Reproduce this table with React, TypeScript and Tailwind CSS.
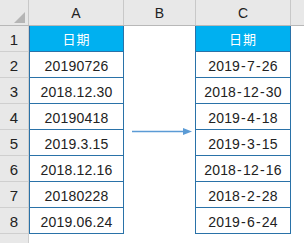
const left = ['20190726', '2018.12.30', '20190418', '2019.3.15', '2018.12.16', '20180228', '2019.06.24'];
const right = ['2019-7-26', '2018-12-30', '2019-4-18', '2019-3-15', '2018-12-16', '2018-2-28', '2019-6-24'];

const font = { fontFamily: '"Liberation Sans", Arial, "Noto Sans CJK SC", sans-serif' };

function Dashed({ text }: { text: string }) {
  const parts = text.split('-');
  return (
    <span>
      {parts.map((p, i) => (
        <span key={i}>
          {i > 0 && <span className="mx-[1px]">-</span>}
          {p}
        </span>
      ))}
    </span>
  );
}

export default function App() {
  return (
    <div className="relative w-[304px] h-[243px] overflow-hidden bg-white text-[#222]" style={font}>
      {/* column headers */}
      <div className="flex h-[26px] bg-[#e8e8e8] border-b border-[#b8b8b8] text-[14px]">
        <div className="w-[29px] shrink-0 border-r border-[#c8c8c8] flex justify-end items-end pr-[3px] pb-[2px]">
          <svg width="11" height="11" viewBox="0 0 11 11">
            <polygon points="11,0 11,11 0,11" fill="#b5b5b5" />
          </svg>
        </div>
        <div className="w-[95px] shrink-0 border-r border-[#c8c8c8] flex items-center justify-center pt-[2px]">A</div>
        <div className="w-[72px] shrink-0 border-r border-[#c8c8c8] flex items-center justify-center pt-[2px]">B</div>
        <div className="w-[95px] shrink-0 border-r border-[#c8c8c8] flex items-center justify-center pt-[2px]">C</div>
        <div className="flex-1" />
      </div>

      {/* row 1: blue header */}
      <div className="flex h-[26px]">
        <div className="w-[29px] shrink-0 bg-[#e8e8e8] border-r border-b border-[#cfcfcf] flex items-center justify-center pt-[3px] text-[15px]">1</div>
        <div className="w-[95px] shrink-0 bg-[#00b0f0] border-x border-b border-[#2a72a8] flex items-center justify-center pt-[2px] text-white text-[13px] tracking-[1px]">日期</div>
        <div className="w-[71px] shrink-0" />
        <div className="w-[96px] shrink-0 bg-[#00b0f0] border-x border-b border-[#2a72a8] flex items-center justify-center pt-[2px] text-white text-[13px] tracking-[1px]">日期</div>
        <div className="flex-1" />
      </div>

      {left.map((v, i) => (
        <div key={v} className="flex h-[26px]">
          <div className="w-[29px] shrink-0 bg-[#e8e8e8] border-r border-b border-[#cfcfcf] flex items-center justify-center pt-[3px] text-[15px]">{i + 2}</div>
          <div className="w-[95px] shrink-0 border-x border-b border-[#2a72a8] flex items-center justify-center pt-[3px] text-[14px] tracking-[0.2px]">{v}</div>
          <div className="w-[71px] shrink-0" />
          <div className="w-[96px] shrink-0 border-x border-b border-[#2a72a8] flex items-center justify-center pt-[3px] text-[14px] tracking-[0.2px]">
            <Dashed text={right[i]} />
          </div>
          <div className="flex-1" />
        </div>
      ))}

      {/* row 9 partial */}
      <div className="flex h-[26px]">
        <div className="w-[29px] shrink-0 bg-[#e8e8e8] border-r border-[#cfcfcf]" />
      </div>

      {/* arrow shape */}
      <svg className="absolute left-[131px] top-[127px]" width="62" height="9" viewBox="0 0 62 9">
        <line x1="1" y1="4.5" x2="53" y2="4.5" stroke="#5b9bd5" strokeWidth="1.3" />
        <polygon points="52,1 61,4.5 52,8" fill="#5b9bd5" />
      </svg>
    </div>
  );
}
